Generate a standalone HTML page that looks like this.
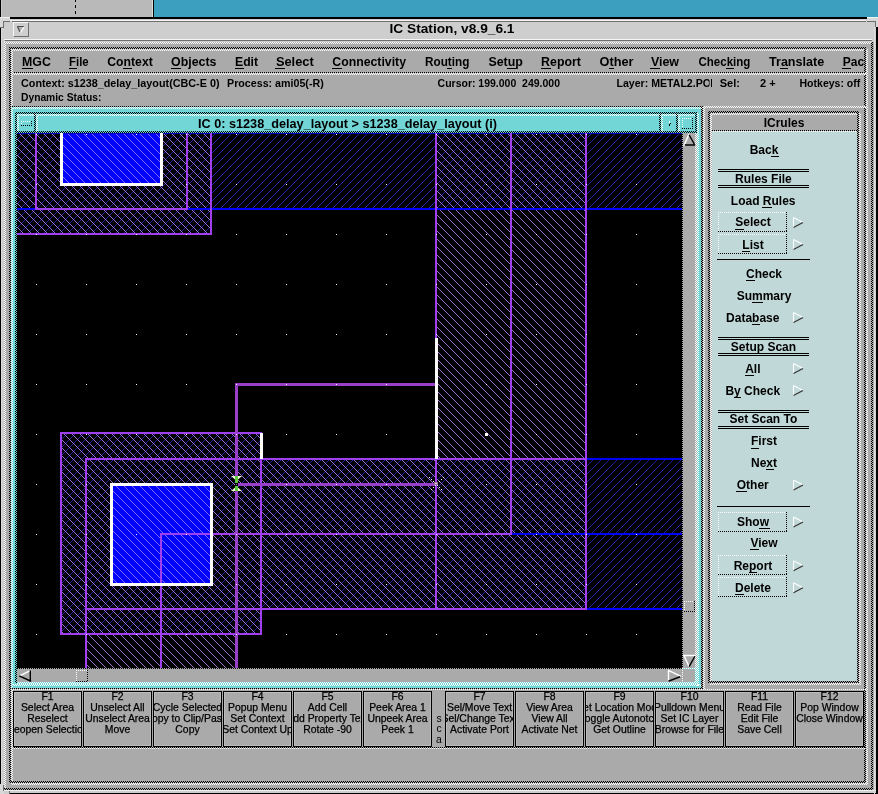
<!DOCTYPE html>
<html><head><meta charset="utf-8"><style>
html,body{margin:0;padding:0;width:878px;height:794px;overflow:hidden;background:#cecece}
svg{display:block;font-family:"Liberation Sans",sans-serif;will-change:transform}
text{white-space:pre}
</style></head><body>
<svg width="878" height="794" viewBox="0 0 878 794" shape-rendering="crispEdges">
<defs>
<pattern id="ck_k0" width="2" height="2" patternUnits="userSpaceOnUse"><rect x="0" y="0" width="1" height="1" fill="#000"/><rect x="1" y="1" width="1" height="1" fill="#000"/></pattern>
<pattern id="ck_w0" width="2" height="2" patternUnits="userSpaceOnUse"><rect x="0" y="0" width="1" height="1" fill="#fff"/><rect x="1" y="1" width="1" height="1" fill="#fff"/></pattern>
<pattern id="ck_k1" width="2" height="2" patternUnits="userSpaceOnUse"><rect x="1" y="0" width="1" height="1" fill="#000"/><rect x="0" y="1" width="1" height="1" fill="#000"/></pattern>
<pattern id="ck_w1" width="2" height="2" patternUnits="userSpaceOnUse"><rect x="1" y="0" width="1" height="1" fill="#fff"/><rect x="0" y="1" width="1" height="1" fill="#fff"/></pattern>
<pattern id="hP" width="8" height="8" patternUnits="userSpaceOnUse"><rect x="0" y="2" width="1" height="1" fill="#a070d0"/><rect x="1" y="3" width="1" height="1" fill="#a070d0"/><rect x="2" y="4" width="1" height="1" fill="#a070d0"/><rect x="3" y="5" width="1" height="1" fill="#a070d0"/><rect x="4" y="6" width="1" height="1" fill="#a070d0"/><rect x="5" y="7" width="1" height="1" fill="#a070d0"/><rect x="6" y="0" width="1" height="1" fill="#a070d0"/><rect x="7" y="1" width="1" height="1" fill="#a070d0"/></pattern>
<pattern id="hB" width="8" height="8" patternUnits="userSpaceOnUse"><rect x="0" y="4" width="1" height="1" fill="#2222a0"/><rect x="1" y="3" width="1" height="1" fill="#2222a0"/><rect x="2" y="2" width="1" height="1" fill="#2222a0"/><rect x="3" y="1" width="1" height="1" fill="#2222a0"/><rect x="4" y="0" width="1" height="1" fill="#2222a0"/><rect x="5" y="7" width="1" height="1" fill="#2222a0"/><rect x="6" y="6" width="1" height="1" fill="#2222a0"/><rect x="7" y="5" width="1" height="1" fill="#2222a0"/></pattern>
<pattern id="hQ" width="8" height="8" patternUnits="userSpaceOnUse"><rect x="0" y="2" width="1" height="1" fill="#8466ff"/><rect x="1" y="3" width="1" height="1" fill="#8466ff"/><rect x="2" y="4" width="1" height="1" fill="#8466ff"/><rect x="3" y="5" width="1" height="1" fill="#8466ff"/><rect x="4" y="6" width="1" height="1" fill="#8466ff"/><rect x="5" y="7" width="1" height="1" fill="#8466ff"/><rect x="6" y="0" width="1" height="1" fill="#8466ff"/><rect x="7" y="1" width="1" height="1" fill="#8466ff"/></pattern>
<clipPath id="clipCanvas"><rect x="17" y="133" width="665" height="535"/></clipPath>
<clipPath id="clipMenu"><rect x="13" y="51" width="852" height="21"/></clipPath>
<clipPath id="clipLayer"><rect x="600" y="74" width="109.5" height="30"/></clipPath>
</defs>
<rect x="0" y="0" width="878" height="794" fill="#cecece" />
<rect x="0" y="0" width="153" height="17" fill="#b9b9b9" />
<rect x="154" y="0" width="724" height="17" fill="#3d9fc0" />
<rect x="152" y="0" width="1" height="17" fill="#dcdcdc" />
<rect x="153" y="0" width="1" height="17" fill="#000" />
<rect x="75" y="0" width="1" height="2" fill="#000" />
<rect x="75" y="5" width="1" height="3" fill="#000" />
<rect x="75" y="11" width="1" height="3" fill="#000" />
<rect x="0" y="0" width="1" height="17" fill="#000" />
<rect x="1" y="0" width="1" height="17" fill="#c8c8c8" />
<rect x="10" y="17" width="857" height="2" fill="#000" />
<rect x="0" y="28" width="1" height="756" fill="#000" />
<rect x="1" y="28" width="1" height="756" fill="#dadada" />
<rect x="0" y="784" width="4" height="10" fill="#d8d8d8" />
<rect x="3" y="785" width="1" height="6" fill="#6e6e6e" />
<rect x="4" y="790" width="872" height="1" fill="#f0f0f0" />
<rect x="10" y="793" width="866" height="1" fill="#000" />
<rect x="9" y="791" width="1" height="3" fill="#6e6e6e" />
<rect x="876" y="27" width="2" height="767" fill="#000" />
<rect x="874" y="27" width="1" height="767" fill="#dadada" />
<rect x="0" y="17" width="10" height="4" fill="#d8d8d8" />
<rect x="0" y="21" width="3" height="6" fill="#d8d8d8" />
<rect x="0" y="17" width="10" height="1" fill="#f0f0f0" />
<rect x="3" y="21" width="7" height="1" fill="#6e6e6e" />
<rect x="3" y="21" width="1" height="6" fill="#6e6e6e" />
<rect x="0" y="27" width="4" height="1" fill="#6e6e6e" />
<rect x="867" y="17" width="11" height="4" fill="#d8d8d8" />
<rect x="875" y="21" width="3" height="6" fill="#d8d8d8" />
<rect x="867" y="17" width="11" height="1" fill="#e8f8f8" />
<rect x="867" y="21" width="8" height="1" fill="#6e6e6e" />
<rect x="875" y="21" width="1" height="6" fill="#6e6e6e" />
<rect x="10" y="20" width="856" height="1" fill="#f4f4f4" />
<rect x="12" y="21" width="854" height="1" fill="#6e6e6e" />
<rect x="13" y="22" width="15" height="1" fill="#f6f6f6" />
<rect x="13" y="22" width="1" height="14" fill="#f6f6f6" />
<rect x="14" y="36" width="15" height="1" fill="#6e6e6e" />
<rect x="28" y="23" width="1" height="14" fill="#6e6e6e" />
<path d="M17 26 L24 26 L20.5 32 Z" fill="#b4b4b4"/><path d="M17 26.5 L24 26.5 M17.5 26.5 L20 32" stroke="#505050" stroke-width="1.2" fill="none" shape-rendering="auto"/><path d="M24 27 L20.5 32.5" stroke="#fff" stroke-width="1.2" shape-rendering="auto"/>
<text x="452" y="33.4" font-size="13.5" font-weight="bold" fill="#000" text-anchor="middle" textLength="125" lengthAdjust="spacingAndGlyphs" >IC Station, v8.9_6.1</text>
<rect x="4" y="39" width="868" height="1" fill="#f6f6f6" />
<rect x="5" y="40" width="867" height="1" fill="#6e6e6e" />
<rect x="4" y="42" width="870" height="748" fill="#aaaaaa" />
<rect x="4" y="42" width="869" height="2" fill="url(#ck_w0)" />
<rect x="4" y="42" width="2" height="748" fill="url(#ck_w0)" />
<rect x="4" y="788" width="869" height="2" fill="url(#ck_k0)" />
<rect x="871" y="42" width="2" height="748" fill="url(#ck_k0)" />
<rect x="11" y="49" width="857" height="2" fill="url(#ck_w0)" />
<rect x="11" y="49" width="2" height="736" fill="url(#ck_w0)" />
<rect x="11" y="783" width="857" height="2" fill="url(#ck_w0)" />
<rect x="866" y="49" width="2" height="736" fill="url(#ck_w0)" />
<rect x="9" y="47" width="857" height="2" fill="url(#ck_k0)" />
<rect x="9" y="47" width="2" height="736" fill="url(#ck_k0)" />
<rect x="9" y="781" width="857" height="2" fill="url(#ck_k0)" />
<rect x="864" y="47" width="2" height="736" fill="url(#ck_k0)" />
<g clip-path="url(#clipMenu)">
<text x="22.0" y="65.7" font-size="12" font-weight="bold" fill="#000" text-anchor="start" textLength="28.8" lengthAdjust="spacingAndGlyphs" >MGC</text>
<rect x="21.5" y="68" width="11.3" height="1" fill="#000"/>
<text x="69.1" y="65.7" font-size="12" font-weight="bold" fill="#000" text-anchor="start" textLength="19.6" lengthAdjust="spacingAndGlyphs" >File</text>
<rect x="68.6" y="68" width="8.0" height="1" fill="#000"/>
<text x="107.2" y="65.7" font-size="12" font-weight="bold" fill="#000" text-anchor="start" textLength="45.6" lengthAdjust="spacingAndGlyphs" >Context</text>
<rect x="123.0" y="68" width="8.5" height="1" fill="#000"/>
<text x="171.1" y="65.7" font-size="12" font-weight="bold" fill="#000" text-anchor="start" textLength="45.4" lengthAdjust="spacingAndGlyphs" >Objects</text>
<rect x="170.6" y="68" width="10.6" height="1" fill="#000"/>
<text x="235.0" y="65.7" font-size="12" font-weight="bold" fill="#000" text-anchor="start" textLength="23.1" lengthAdjust="spacingAndGlyphs" >Edit</text>
<rect x="234.5" y="68" width="9.2" height="1" fill="#000"/>
<text x="275.9" y="65.7" font-size="12" font-weight="bold" fill="#000" text-anchor="start" textLength="37.8" lengthAdjust="spacingAndGlyphs" >Select</text>
<rect x="275.4" y="68" width="9.6" height="1" fill="#000"/>
<text x="332.3" y="65.7" font-size="12" font-weight="bold" fill="#000" text-anchor="start" textLength="73.7" lengthAdjust="spacingAndGlyphs" >Connectivity</text>
<rect x="331.8" y="68" width="9.9" height="1" fill="#000"/>
<text x="425.0" y="65.7" font-size="12" font-weight="bold" fill="#000" text-anchor="start" textLength="44.4" lengthAdjust="spacingAndGlyphs" >Routing</text>
<rect x="447.4" y="68" width="4.9" height="1" fill="#000"/>
<text x="488.4" y="65.7" font-size="12" font-weight="bold" fill="#000" text-anchor="start" textLength="34.4" lengthAdjust="spacingAndGlyphs" >Setup</text>
<rect x="507.2" y="68" width="8.6" height="1" fill="#000"/>
<text x="541.1" y="65.7" font-size="12" font-weight="bold" fill="#000" text-anchor="start" textLength="39.8" lengthAdjust="spacingAndGlyphs" >Report</text>
<rect x="540.6" y="68" width="9.9" height="1" fill="#000"/>
<text x="599.5" y="65.7" font-size="12" font-weight="bold" fill="#000" text-anchor="start" textLength="34" lengthAdjust="spacingAndGlyphs" >Other</text>
<rect x="608.9" y="68" width="5.2" height="1" fill="#000"/>
<text x="650.9" y="65.7" font-size="12" font-weight="bold" fill="#000" text-anchor="start" textLength="28.1" lengthAdjust="spacingAndGlyphs" >View</text>
<rect x="650.4" y="68" width="9.3" height="1" fill="#000"/>
<text x="698.5" y="65.7" font-size="12" font-weight="bold" fill="#000" text-anchor="start" textLength="51.8" lengthAdjust="spacingAndGlyphs" >Checking</text>
<rect x="726.1" y="68" width="7.4" height="1" fill="#000"/>
<text x="769.0" y="65.7" font-size="12" font-weight="bold" fill="#000" text-anchor="start" textLength="55.2" lengthAdjust="spacingAndGlyphs" >Translate</text>
<rect x="780.4" y="68" width="8.0" height="1" fill="#000"/>
<text x="842.8" y="65.7" font-size="12" font-weight="bold" fill="#000" text-anchor="start" >Pac</text>
<rect x="842.3" y="68" width="9.0" height="1" fill="#000"/>
</g>
<g id="ULS"></g>
<rect x="13" y="72" width="853" height="1" fill="url(#ck_k0)" />
<rect x="13" y="73" width="853" height="2" fill="url(#ck_w0)" />
<text x="21" y="86.7" font-size="11" font-weight="bold" fill="#000" text-anchor="start" textLength="198.5" lengthAdjust="spacingAndGlyphs" >Context: s1238_delay_layout(CBC-E 0)</text>
<text x="227.1" y="86.7" font-size="11" font-weight="bold" fill="#000" text-anchor="start" textLength="96.6" lengthAdjust="spacingAndGlyphs" >Process: ami05(-R)</text>
<text x="437.6" y="86.7" font-size="11" font-weight="bold" fill="#000" text-anchor="start" textLength="122.4" lengthAdjust="spacingAndGlyphs" >Cursor: 199.000  249.000</text>
<g clip-path="url(#clipLayer)">
<text x="616.5" y="86.7" font-size="11" font-weight="bold" fill="#000" text-anchor="start" textLength="94.5" lengthAdjust="spacingAndGlyphs" >Layer: METAL2.PO</text>
</g>
<rect x="711" y="79" width="1" height="8" fill="#000" />
<text x="719.7" y="86.7" font-size="11" font-weight="bold" fill="#000" text-anchor="start" >Sel:</text>
<text x="760" y="86.7" font-size="11" font-weight="bold" fill="#000" text-anchor="start" >2 +</text>
<text x="799.5" y="86.7" font-size="11" font-weight="bold" fill="#000" text-anchor="start" textLength="60.8" lengthAdjust="spacingAndGlyphs" >Hotkeys: off</text>
<text x="21" y="100.8" font-size="11" font-weight="bold" fill="#000" text-anchor="start" textLength="80.5" lengthAdjust="spacingAndGlyphs" >Dynamic Status:</text>
<rect x="11" y="106" width="692" height="1" fill="url(#ck_k0)" />
<rect x="703" y="106" width="163" height="2" fill="url(#ck_w0)" />
<rect x="11" y="107" width="690" height="581" fill="#72d6d6" />
<rect x="13" y="107" width="690" height="2" fill="url(#ck_w1)" />
<rect x="11" y="107" width="2" height="582" fill="url(#ck_w0)" />
<rect x="701" y="106" width="2" height="584" fill="url(#ck_k0)" />
<rect x="11" y="688" width="692" height="1" fill="url(#ck_k0)" />
<rect x="703" y="106" width="2" height="584" fill="url(#ck_w0)" />
<rect x="15" y="112" width="682" height="2" fill="url(#ck_k0)" />
<rect x="15" y="112" width="2" height="21" fill="url(#ck_k0)" />
<rect x="15" y="131" width="682" height="2" fill="url(#ck_k0)" />
<rect x="695" y="112" width="2" height="21" fill="url(#ck_k0)" />
<rect x="17" y="114" width="678" height="2" fill="url(#ck_w1)" />
<rect x="17" y="114" width="2" height="17" fill="url(#ck_w1)" />
<rect x="19" y="116" width="676" height="15" fill="#72d6d6" />
<rect x="34" y="114" width="2" height="18" fill="url(#ck_k0)" />
<rect x="36" y="114" width="2" height="18" fill="url(#ck_w1)" />
<path d="M21 121.5 H31 M21.5 121 V126" stroke="#fff" stroke-width="1" stroke-dasharray="1 1"/><path d="M21 125.5 H32 M31.5 121 V126" stroke="#000" stroke-width="1" stroke-dasharray="1 1"/>
<text x="198" y="127.7" font-size="12" font-weight="bold" fill="#000" text-anchor="start" textLength="299" lengthAdjust="spacingAndGlyphs" >IC 0: s1238_delay_layout &gt; s1238_delay_layout (i)</text>
<rect x="659" y="114" width="2" height="18" fill="url(#ck_k0)" />
<rect x="661" y="114" width="2" height="18" fill="url(#ck_w1)" />
<rect x="676" y="114" width="2" height="18" fill="url(#ck_k0)" />
<rect x="678" y="114" width="2" height="18" fill="url(#ck_w1)" />
<rect x="669" y="121" width="1" height="2" fill="#fff" />
<rect x="669" y="124" width="1" height="2" fill="#000" />
<rect x="670" y="123" width="1" height="1" fill="#000" />
<path d="M682 118.5 H693 M682.5 118 V129" stroke="#fff" stroke-width="1" stroke-dasharray="1 1"/><path d="M682 128.5 H694 M692.5 118 V129" stroke="#000" stroke-width="1" stroke-dasharray="1 1"/>
<rect x="16" y="132" width="666" height="1" fill="url(#ck_k0)" />
<rect x="15" y="132" width="2" height="551" fill="url(#ck_k0)" />
<rect x="682" y="133" width="15" height="535" fill="#aaaaaa" />
<rect x="681" y="133" width="1" height="535" fill="url(#ck_k1)" />
<rect x="682" y="133" width="1" height="535" fill="url(#ck_k0)" />
<rect x="17" y="668" width="666" height="14" fill="#aaaaaa" />
<rect x="17" y="668" width="666" height="1" fill="url(#ck_k1)" />
<rect x="695" y="133" width="2" height="550" fill="url(#ck_w0)" />
<rect x="17" y="682" width="680" height="2" fill="url(#ck_w0)" />
<rect x="697" y="113" width="2" height="573" fill="url(#ck_w0)" />
<rect x="13" y="684" width="688" height="2" fill="url(#ck_w1)" />
<rect x="683" y="669" width="12" height="13" fill="#aaaaaa" />
<rect x="682" y="668" width="14" height="1" fill="url(#ck_w0)" />
<rect x="682" y="668" width="1" height="15" fill="url(#ck_w0)" />
<path d="M684 145.5 L688.8 134.5" stroke="#fff" stroke-width="1.4" fill="none" shape-rendering="auto" stroke-linecap="square"/><path d="M689.5 135.5 L694 143.5 M685.5 145 H694.5" stroke="#000" stroke-width="1.4" fill="none" shape-rendering="auto" stroke-linecap="square"/>
<path d="M683.8 655.5 H695 M684 655.5 L688.8 666" stroke="#fff" stroke-width="1.4" fill="none" shape-rendering="auto" stroke-linecap="square"/><path d="M694.5 657 L689.5 666" stroke="#000" stroke-width="1.4" fill="none" shape-rendering="auto" stroke-linecap="square"/>
<path d="M30.5 670.5 L19.8 675.8" stroke="#fff" stroke-width="1.4" fill="none" shape-rendering="auto" stroke-linecap="square"/><path d="M19.8 676.2 L30.5 681 M30.3 671 V681" stroke="#000" stroke-width="1.4" fill="none" shape-rendering="auto" stroke-linecap="square"/>
<path d="M668.5 670.5 V681.5 M668.5 670.5 L680.3 676" stroke="#fff" stroke-width="1.4" fill="none" shape-rendering="auto" stroke-linecap="square"/><path d="M669 681 L679.5 677" stroke="#000" stroke-width="1.4" fill="none" shape-rendering="auto" stroke-linecap="square"/>
<path d="M76 670.5 H88 M76.5 670 V682" stroke="#fff" stroke-dasharray="1 1"/><path d="M76 681.5 H88 M87.5 670 V682" stroke="#000" stroke-dasharray="1 1"/>
<path d="M684 601.5 H695 M684.5 601 V612" stroke="#fff" stroke-dasharray="1 1"/><path d="M684 611.5 H695 M694.5 601 V612" stroke="#000" stroke-dasharray="1 1"/>
<g clip-path="url(#clipCanvas)">
<rect x="17" y="133" width="665" height="535" fill="#000" />
<rect x="17" y="133" width="665" height="77" fill="url(#hB)" />
<rect x="17" y="133" width="195" height="102" fill="url(#hB)" />
<rect x="61" y="433" width="201" height="202" fill="url(#hB)" />
<rect x="86" y="459" width="596" height="151" fill="url(#hB)" />
<rect x="17" y="120" width="195" height="115" fill="url(#hP)" />
<rect x="436" y="120" width="151" height="490" fill="url(#hP)" />
<rect x="61" y="433" width="201" height="202" fill="url(#hP)" />
<rect x="86" y="459" width="501" height="151" fill="url(#hP)" />
<rect x="86" y="609" width="151" height="60" fill="url(#hP)" />
<rect x="61" y="120" width="102" height="65" fill="#0000ff" />
<rect x="61" y="120" width="102" height="65" fill="url(#hQ)" />
<rect x="111" y="484" width="102" height="101" fill="#0000ff" />
<rect x="111" y="484" width="102" height="101" fill="url(#hQ)" />
<rect x="17" y="208" width="665" height="2" fill="#0000ff" />
<rect x="17" y="133" width="665" height="1" fill="#0000c0" />
<rect x="586" y="458" width="96" height="2" fill="#0000ff" />
<rect x="511" y="533" width="171" height="2" fill="#0000ff" />
<rect x="586" y="608" width="96" height="2" fill="#0000ff" />
<rect x="35" y="120" width="153" height="2" fill="#a040f0" />
<rect x="35" y="208" width="153" height="2" fill="#a040f0" />
<rect x="35" y="120" width="2" height="90" fill="#a040f0" />
<rect x="186" y="120" width="2" height="90" fill="#a040f0" />
<rect x="10" y="120" width="202" height="2" fill="#a040f0" />
<rect x="10" y="233" width="202" height="2" fill="#a040f0" />
<rect x="10" y="120" width="2" height="115" fill="#a040f0" />
<rect x="210" y="120" width="2" height="115" fill="#a040f0" />
<rect x="435" y="120" width="152" height="2" fill="#a040f0" />
<rect x="435" y="608" width="152" height="2" fill="#a040f0" />
<rect x="435" y="120" width="2" height="490" fill="#a040f0" />
<rect x="585" y="120" width="2" height="490" fill="#a040f0" />
<rect x="510" y="120" width="2" height="415" fill="#a040f0" />
<rect x="60" y="432" width="202" height="2" fill="#a040f0" />
<rect x="60" y="633" width="202" height="2" fill="#a040f0" />
<rect x="60" y="432" width="2" height="203" fill="#a040f0" />
<rect x="260" y="432" width="2" height="203" fill="#a040f0" />
<rect x="85" y="458" width="502" height="2" fill="#a040f0" />
<rect x="85" y="608" width="502" height="2" fill="#a040f0" />
<rect x="85" y="458" width="2" height="152" fill="#a040f0" />
<rect x="585" y="458" width="2" height="152" fill="#a040f0" />
<rect x="85" y="608" width="2" height="62" fill="#a040f0" />
<rect x="160" y="533" width="2" height="137" fill="#a040f0" />
<rect x="235" y="608" width="2" height="62" fill="#a040f0" />
<rect x="160" y="533" width="352" height="2" fill="#a040f0" />
<rect x="235" y="383" width="202" height="3" fill="#9a40c8" />
<rect x="235" y="383" width="3" height="287" fill="#9a40c8" />
<rect x="235" y="483" width="202" height="3" fill="#9a40c8" />
<rect x="61.5" y="120" width="100" height="64.5" fill="none" stroke="#fff" stroke-width="3"/>
<rect x="111.5" y="484.5" width="99.5" height="100" fill="none" stroke="#fff" stroke-width="3"/>
<rect x="435" y="338" width="3" height="121" fill="#fff" />
<rect x="260" y="433" width="3" height="26" fill="#fff" />
<rect x="36" y="134" width="1" height="1" fill="#fff" />
<rect x="36" y="184" width="1" height="1" fill="#fff" />
<rect x="36" y="234" width="1" height="1" fill="#fff" />
<rect x="36" y="284" width="1" height="1" fill="#fff" />
<rect x="36" y="334" width="1" height="1" fill="#fff" />
<rect x="36" y="384" width="1" height="1" fill="#fff" />
<rect x="36" y="434" width="1" height="1" fill="#fff" />
<rect x="36" y="484" width="1" height="1" fill="#fff" />
<rect x="36" y="534" width="1" height="1" fill="#fff" />
<rect x="36" y="584" width="1" height="1" fill="#fff" />
<rect x="36" y="634" width="1" height="1" fill="#fff" />
<rect x="86" y="134" width="1" height="1" fill="#fff" />
<rect x="86" y="184" width="1" height="1" fill="#fff" />
<rect x="86" y="234" width="1" height="1" fill="#fff" />
<rect x="86" y="284" width="1" height="1" fill="#fff" />
<rect x="86" y="334" width="1" height="1" fill="#fff" />
<rect x="86" y="384" width="1" height="1" fill="#fff" />
<rect x="86" y="434" width="1" height="1" fill="#fff" />
<rect x="86" y="484" width="1" height="1" fill="#fff" />
<rect x="86" y="534" width="1" height="1" fill="#fff" />
<rect x="86" y="584" width="1" height="1" fill="#fff" />
<rect x="86" y="634" width="1" height="1" fill="#fff" />
<rect x="136" y="134" width="1" height="1" fill="#fff" />
<rect x="136" y="184" width="1" height="1" fill="#fff" />
<rect x="136" y="234" width="1" height="1" fill="#fff" />
<rect x="136" y="284" width="1" height="1" fill="#fff" />
<rect x="136" y="334" width="1" height="1" fill="#fff" />
<rect x="136" y="384" width="1" height="1" fill="#fff" />
<rect x="136" y="434" width="1" height="1" fill="#fff" />
<rect x="136" y="484" width="1" height="1" fill="#fff" />
<rect x="136" y="534" width="1" height="1" fill="#fff" />
<rect x="136" y="584" width="1" height="1" fill="#fff" />
<rect x="136" y="634" width="1" height="1" fill="#fff" />
<rect x="186" y="134" width="1" height="1" fill="#fff" />
<rect x="186" y="184" width="1" height="1" fill="#fff" />
<rect x="186" y="234" width="1" height="1" fill="#fff" />
<rect x="186" y="284" width="1" height="1" fill="#fff" />
<rect x="186" y="334" width="1" height="1" fill="#fff" />
<rect x="186" y="384" width="1" height="1" fill="#fff" />
<rect x="186" y="434" width="1" height="1" fill="#fff" />
<rect x="186" y="484" width="1" height="1" fill="#fff" />
<rect x="186" y="534" width="1" height="1" fill="#fff" />
<rect x="186" y="584" width="1" height="1" fill="#fff" />
<rect x="186" y="634" width="1" height="1" fill="#fff" />
<rect x="236" y="134" width="1" height="1" fill="#fff" />
<rect x="236" y="184" width="1" height="1" fill="#fff" />
<rect x="236" y="234" width="1" height="1" fill="#fff" />
<rect x="236" y="284" width="1" height="1" fill="#fff" />
<rect x="236" y="334" width="1" height="1" fill="#fff" />
<rect x="236" y="384" width="1" height="1" fill="#fff" />
<rect x="236" y="434" width="1" height="1" fill="#fff" />
<rect x="236" y="484" width="1" height="1" fill="#fff" />
<rect x="236" y="534" width="1" height="1" fill="#fff" />
<rect x="236" y="584" width="1" height="1" fill="#fff" />
<rect x="236" y="634" width="1" height="1" fill="#fff" />
<rect x="286" y="134" width="1" height="1" fill="#fff" />
<rect x="286" y="184" width="1" height="1" fill="#fff" />
<rect x="286" y="234" width="1" height="1" fill="#fff" />
<rect x="286" y="284" width="1" height="1" fill="#fff" />
<rect x="286" y="334" width="1" height="1" fill="#fff" />
<rect x="286" y="384" width="1" height="1" fill="#fff" />
<rect x="286" y="434" width="1" height="1" fill="#fff" />
<rect x="286" y="484" width="1" height="1" fill="#fff" />
<rect x="286" y="534" width="1" height="1" fill="#fff" />
<rect x="286" y="584" width="1" height="1" fill="#fff" />
<rect x="286" y="634" width="1" height="1" fill="#fff" />
<rect x="336" y="134" width="1" height="1" fill="#fff" />
<rect x="336" y="184" width="1" height="1" fill="#fff" />
<rect x="336" y="234" width="1" height="1" fill="#fff" />
<rect x="336" y="284" width="1" height="1" fill="#fff" />
<rect x="336" y="334" width="1" height="1" fill="#fff" />
<rect x="336" y="384" width="1" height="1" fill="#fff" />
<rect x="336" y="434" width="1" height="1" fill="#fff" />
<rect x="336" y="484" width="1" height="1" fill="#fff" />
<rect x="336" y="534" width="1" height="1" fill="#fff" />
<rect x="336" y="584" width="1" height="1" fill="#fff" />
<rect x="336" y="634" width="1" height="1" fill="#fff" />
<rect x="386" y="134" width="1" height="1" fill="#fff" />
<rect x="386" y="184" width="1" height="1" fill="#fff" />
<rect x="386" y="234" width="1" height="1" fill="#fff" />
<rect x="386" y="284" width="1" height="1" fill="#fff" />
<rect x="386" y="334" width="1" height="1" fill="#fff" />
<rect x="386" y="384" width="1" height="1" fill="#fff" />
<rect x="386" y="434" width="1" height="1" fill="#fff" />
<rect x="386" y="484" width="1" height="1" fill="#fff" />
<rect x="386" y="534" width="1" height="1" fill="#fff" />
<rect x="386" y="584" width="1" height="1" fill="#fff" />
<rect x="386" y="634" width="1" height="1" fill="#fff" />
<rect x="436" y="134" width="1" height="1" fill="#fff" />
<rect x="436" y="184" width="1" height="1" fill="#fff" />
<rect x="436" y="234" width="1" height="1" fill="#fff" />
<rect x="436" y="284" width="1" height="1" fill="#fff" />
<rect x="436" y="334" width="1" height="1" fill="#fff" />
<rect x="436" y="384" width="1" height="1" fill="#fff" />
<rect x="436" y="434" width="1" height="1" fill="#fff" />
<rect x="436" y="484" width="1" height="1" fill="#fff" />
<rect x="436" y="534" width="1" height="1" fill="#fff" />
<rect x="436" y="584" width="1" height="1" fill="#fff" />
<rect x="436" y="634" width="1" height="1" fill="#fff" />
<rect x="486" y="134" width="1" height="1" fill="#fff" />
<rect x="486" y="184" width="1" height="1" fill="#fff" />
<rect x="486" y="234" width="1" height="1" fill="#fff" />
<rect x="486" y="284" width="1" height="1" fill="#fff" />
<rect x="486" y="334" width="1" height="1" fill="#fff" />
<rect x="486" y="384" width="1" height="1" fill="#fff" />
<rect x="486" y="434" width="1" height="1" fill="#fff" />
<rect x="486" y="484" width="1" height="1" fill="#fff" />
<rect x="486" y="534" width="1" height="1" fill="#fff" />
<rect x="486" y="584" width="1" height="1" fill="#fff" />
<rect x="486" y="634" width="1" height="1" fill="#fff" />
<rect x="536" y="134" width="1" height="1" fill="#fff" />
<rect x="536" y="184" width="1" height="1" fill="#fff" />
<rect x="536" y="234" width="1" height="1" fill="#fff" />
<rect x="536" y="284" width="1" height="1" fill="#fff" />
<rect x="536" y="334" width="1" height="1" fill="#fff" />
<rect x="536" y="384" width="1" height="1" fill="#fff" />
<rect x="536" y="434" width="1" height="1" fill="#fff" />
<rect x="536" y="484" width="1" height="1" fill="#fff" />
<rect x="536" y="534" width="1" height="1" fill="#fff" />
<rect x="536" y="584" width="1" height="1" fill="#fff" />
<rect x="536" y="634" width="1" height="1" fill="#fff" />
<rect x="586" y="134" width="1" height="1" fill="#fff" />
<rect x="586" y="184" width="1" height="1" fill="#fff" />
<rect x="586" y="234" width="1" height="1" fill="#fff" />
<rect x="586" y="284" width="1" height="1" fill="#fff" />
<rect x="586" y="334" width="1" height="1" fill="#fff" />
<rect x="586" y="384" width="1" height="1" fill="#fff" />
<rect x="586" y="434" width="1" height="1" fill="#fff" />
<rect x="586" y="484" width="1" height="1" fill="#fff" />
<rect x="586" y="534" width="1" height="1" fill="#fff" />
<rect x="586" y="584" width="1" height="1" fill="#fff" />
<rect x="586" y="634" width="1" height="1" fill="#fff" />
<rect x="636" y="134" width="1" height="1" fill="#fff" />
<rect x="636" y="184" width="1" height="1" fill="#fff" />
<rect x="636" y="234" width="1" height="1" fill="#fff" />
<rect x="636" y="284" width="1" height="1" fill="#fff" />
<rect x="636" y="334" width="1" height="1" fill="#fff" />
<rect x="636" y="384" width="1" height="1" fill="#fff" />
<rect x="636" y="434" width="1" height="1" fill="#fff" />
<rect x="636" y="484" width="1" height="1" fill="#fff" />
<rect x="636" y="534" width="1" height="1" fill="#fff" />
<rect x="636" y="584" width="1" height="1" fill="#fff" />
<rect x="636" y="634" width="1" height="1" fill="#fff" />
<rect x="485" y="433" width="3" height="3" fill="#fff" />
<path d="M231 476 L242 476 L238 479.5 L235 479.5 Z M231 491 L242 491 L238 487.5 L235 487.5 Z" fill="#f0f8d0" shape-rendering="auto"/>
<rect x="235" y="476" width="3" height="7" fill="#60c840" />
<rect x="235" y="486" width="3" height="5" fill="#60c840" />
<rect x="235" y="483" width="3" height="3" fill="#000" />
<rect x="236" y="484" width="1" height="1" fill="#808080" />
<rect x="429" y="477" width="1" height="1" fill="#f0f0f0" />
<rect x="443" y="477" width="1" height="1" fill="#f0f0f0" />
<rect x="431" y="479" width="1" height="1" fill="#f0f0f0" />
<rect x="441" y="479" width="1" height="1" fill="#f0f0f0" />
<rect x="433" y="481" width="1" height="1" fill="#f0f0f0" />
<rect x="439" y="481" width="1" height="1" fill="#f0f0f0" />
<rect x="435" y="483" width="1" height="1" fill="#f0f0f0" />
<rect x="437" y="483" width="1" height="1" fill="#f0f0f0" />
<rect x="437" y="485" width="1" height="1" fill="#f0f0f0" />
<rect x="435" y="485" width="1" height="1" fill="#f0f0f0" />
<rect x="439" y="487" width="1" height="1" fill="#f0f0f0" />
<rect x="433" y="487" width="1" height="1" fill="#f0f0f0" />
<rect x="441" y="489" width="1" height="1" fill="#f0f0f0" />
<rect x="431" y="489" width="1" height="1" fill="#f0f0f0" />
<rect x="434" y="482" width="4" height="3" fill="#a070a0" />
<rect x="435" y="483" width="2" height="1" fill="#d0d0d0" />
</g>
<rect x="710" y="113" width="151" height="2" fill="url(#ck_w0)" />
<rect x="710" y="113" width="2" height="572" fill="url(#ck_w0)" />
<rect x="710" y="683" width="151" height="2" fill="url(#ck_w0)" />
<rect x="859" y="113" width="2" height="572" fill="url(#ck_w0)" />
<rect x="708" y="111" width="151" height="2" fill="url(#ck_k0)" />
<rect x="708" y="111" width="2" height="572" fill="url(#ck_k0)" />
<rect x="708" y="681" width="151" height="2" fill="url(#ck_k0)" />
<rect x="857" y="111" width="2" height="572" fill="url(#ck_k0)" />
<rect x="712" y="115" width="145" height="15" fill="#aaaaaa" />
<rect x="712" y="130" width="145" height="1" fill="url(#ck_k0)" />
<rect x="712" y="131" width="145" height="550" fill="#c0d8d8" />
<rect x="712" y="131" width="145" height="1" fill="url(#ck_w0)" />
<text x="784" y="126.6" font-size="12" font-weight="bold" fill="#000" text-anchor="middle" >ICrules</text>
<text x="764" y="153.9" font-size="12" font-weight="bold" fill="#000" text-anchor="middle" >Back</text>
<rect x="771.2" y="156" width="7.7" height="1" fill="#000"/>
<text x="763.4" y="182.7" font-size="12" font-weight="bold" fill="#000" text-anchor="middle" >Rules File</text>
<text x="763.2" y="205" font-size="12" font-weight="bold" fill="#000" text-anchor="middle" >Load Rules</text>
<rect x="762.4" y="207" width="9.7" height="1" fill="#000"/>
<path d="M718 212.4 H786 M718.5 211.9 V231.9" stroke="#fff" stroke-width="1" stroke-dasharray="1 1" fill="none"/><path d="M718 231.4 H787 M786.5 211.9 V231.9" stroke="#000" stroke-width="1" stroke-dasharray="1 1" fill="none"/>
<text x="753" y="226.4" font-size="12" font-weight="bold" fill="#000" text-anchor="middle" >Select</text>
<rect x="734.8" y="229" width="9.0" height="1" fill="#000"/>
<path d="M793.5 217.4 L803 222.4 M793.5 217.4 L793.5 227.4" stroke="#fff" stroke-width="1.1" fill="none" shape-rendering="auto"/><path d="M793.5 227.4 L803 222.4" stroke="#303030" stroke-width="1.1" fill="none" shape-rendering="auto"/>
<path d="M718 234.5 H786 M718.5 234.0 V254.0" stroke="#fff" stroke-width="1" stroke-dasharray="1 1" fill="none"/><path d="M718 253.5 H787 M786.5 234.0 V254.0" stroke="#000" stroke-width="1" stroke-dasharray="1 1" fill="none"/>
<text x="753" y="248.5" font-size="12" font-weight="bold" fill="#000" text-anchor="middle" >List</text>
<rect x="741.8" y="251" width="8.3" height="1" fill="#000"/>
<path d="M793.5 239.5 L803 244.5 M793.5 239.5 L793.5 249.5" stroke="#fff" stroke-width="1.1" fill="none" shape-rendering="auto"/><path d="M793.5 249.5 L803 244.5" stroke="#303030" stroke-width="1.1" fill="none" shape-rendering="auto"/>
<text x="764" y="277.7" font-size="12" font-weight="bold" fill="#000" text-anchor="middle" >Check</text>
<rect x="745.5" y="280" width="9.7" height="1" fill="#000"/>
<text x="764" y="299.6" font-size="12" font-weight="bold" fill="#000" text-anchor="middle" >Summary</text>
<rect x="751.5" y="302" width="11.7" height="1" fill="#000"/>
<text x="752.8" y="321.5" font-size="12" font-weight="bold" fill="#000" text-anchor="middle" >Database</text>
<rect x="751.6" y="324" width="8.3" height="1" fill="#000"/>
<path d="M793.5 312.5 L803 317.5 M793.5 312.5 L793.5 322.5" stroke="#fff" stroke-width="1.1" fill="none" shape-rendering="auto"/><path d="M793.5 322.5 L803 317.5" stroke="#303030" stroke-width="1.1" fill="none" shape-rendering="auto"/>
<text x="763.4" y="350.5" font-size="12" font-weight="bold" fill="#000" text-anchor="middle" >Setup Scan</text>
<text x="752.8" y="372.5" font-size="12" font-weight="bold" fill="#000" text-anchor="middle" >All</text>
<rect x="744.6" y="375" width="9.7" height="1" fill="#000"/>
<path d="M793.5 363.5 L803 368.5 M793.5 363.5 L793.5 373.5" stroke="#fff" stroke-width="1.1" fill="none" shape-rendering="auto"/><path d="M793.5 373.5 L803 368.5" stroke="#303030" stroke-width="1.1" fill="none" shape-rendering="auto"/>
<text x="752.8" y="394.6" font-size="12" font-weight="bold" fill="#000" text-anchor="middle" >By Check</text>
<rect x="733.6" y="397" width="7.7" height="1" fill="#000"/>
<path d="M793.5 385.6 L803 390.6 M793.5 385.6 L793.5 395.6" stroke="#fff" stroke-width="1.1" fill="none" shape-rendering="auto"/><path d="M793.5 395.6 L803 390.6" stroke="#303030" stroke-width="1.1" fill="none" shape-rendering="auto"/>
<text x="763.4" y="423.3" font-size="12" font-weight="bold" fill="#000" text-anchor="middle" >Set Scan To</text>
<text x="764" y="445.2" font-size="12" font-weight="bold" fill="#000" text-anchor="middle" >First</text>
<rect x="750.5" y="448" width="8.3" height="1" fill="#000"/>
<text x="764" y="467.1" font-size="12" font-weight="bold" fill="#000" text-anchor="middle" >Next</text>
<rect x="765.8" y="469" width="7.7" height="1" fill="#000"/>
<text x="752.8" y="489" font-size="12" font-weight="bold" fill="#000" text-anchor="middle" >Other</text>
<rect x="736.3" y="491" width="10.3" height="1" fill="#000"/>
<path d="M793.5 480 L803 485 M793.5 480 L793.5 490" stroke="#fff" stroke-width="1.1" fill="none" shape-rendering="auto"/><path d="M793.5 490 L803 485" stroke="#303030" stroke-width="1.1" fill="none" shape-rendering="auto"/>
<path d="M718 512.0 H786 M718.5 511.5 V531.5" stroke="#fff" stroke-width="1" stroke-dasharray="1 1" fill="none"/><path d="M718 531.0 H787 M786.5 511.5 V531.5" stroke="#000" stroke-width="1" stroke-dasharray="1 1" fill="none"/>
<text x="753" y="526" font-size="12" font-weight="bold" fill="#000" text-anchor="middle" >Show</text>
<rect x="759.2" y="528" width="10.3" height="1" fill="#000"/>
<path d="M793.5 517 L803 522 M793.5 517 L793.5 527" stroke="#fff" stroke-width="1.1" fill="none" shape-rendering="auto"/><path d="M793.5 527 L803 522" stroke="#303030" stroke-width="1.1" fill="none" shape-rendering="auto"/>
<text x="764" y="547.1" font-size="12" font-weight="bold" fill="#000" text-anchor="middle" >View</text>
<rect x="749.9" y="549" width="9.0" height="1" fill="#000"/>
<path d="M718 555.8 H786 M718.5 555.3 V575.3" stroke="#fff" stroke-width="1" stroke-dasharray="1 1" fill="none"/><path d="M718 574.8 H787 M786.5 555.3 V575.3" stroke="#000" stroke-width="1" stroke-dasharray="1 1" fill="none"/>
<text x="753" y="569.8" font-size="12" font-weight="bold" fill="#000" text-anchor="middle" >Report</text>
<rect x="748.5" y="572" width="8.3" height="1" fill="#000"/>
<path d="M793.5 560.8 L803 565.8 M793.5 560.8 L793.5 570.8" stroke="#fff" stroke-width="1.1" fill="none" shape-rendering="auto"/><path d="M793.5 570.8 L803 565.8" stroke="#303030" stroke-width="1.1" fill="none" shape-rendering="auto"/>
<path d="M718 577.7 H786 M718.5 577.2 V597.2" stroke="#fff" stroke-width="1" stroke-dasharray="1 1" fill="none"/><path d="M718 596.7 H787 M786.5 577.2 V597.2" stroke="#000" stroke-width="1" stroke-dasharray="1 1" fill="none"/>
<text x="753" y="591.7" font-size="12" font-weight="bold" fill="#000" text-anchor="middle" >Delete</text>
<rect x="734.5" y="594" width="9.7" height="1" fill="#000"/>
<path d="M793.5 582.7 L803 587.7 M793.5 582.7 L793.5 592.7" stroke="#fff" stroke-width="1.1" fill="none" shape-rendering="auto"/><path d="M793.5 592.7 L803 587.7" stroke="#303030" stroke-width="1.1" fill="none" shape-rendering="auto"/>
<rect x="718" y="169" width="91" height="1" fill="#000" />
<rect x="718" y="171" width="91" height="1" fill="#000" />
<rect x="718" y="185" width="91" height="1" fill="#000" />
<rect x="718" y="187" width="91" height="1" fill="#000" />
<rect x="718" y="337" width="91" height="1" fill="#000" />
<rect x="718" y="339" width="91" height="1" fill="#000" />
<rect x="718" y="353" width="91" height="1" fill="#000" />
<rect x="718" y="355" width="91" height="1" fill="#000" />
<rect x="718" y="410" width="91" height="1" fill="#000" />
<rect x="718" y="412" width="91" height="1" fill="#000" />
<rect x="718" y="426" width="91" height="1" fill="#000" />
<rect x="718" y="428" width="91" height="1" fill="#000" />
<rect x="717" y="259" width="93" height="1" fill="#000" />
<rect x="717" y="506" width="93" height="1" fill="#000" />
<rect x="11" y="689" width="855" height="1" fill="url(#ck_w0)" />
<rect x="13.5" y="691.5" width="68" height="55" fill="#aaaaaa" stroke="#000" stroke-width="1"/>
<rect x="14.5" y="692.5" width="66" height="53" fill="none" stroke="#bcbcbc" stroke-width="1"/>
<clipPath id="fk0"><rect x="14" y="692" width="67" height="54"/></clipPath>
<g clip-path="url(#fk0)">
<text x="47.5" y="699.7" font-size="10.4" font-weight="normal" fill="#000" text-anchor="middle" stroke="#000" stroke-width="0.25">F1</text>
<text x="47.5" y="710.8" font-size="10.4" font-weight="normal" fill="#000" text-anchor="middle" stroke="#000" stroke-width="0.25">Select Area</text>
<text x="47.5" y="721.6999999999999" font-size="10.4" font-weight="normal" fill="#000" text-anchor="middle" stroke="#000" stroke-width="0.25">Reselect</text>
<text x="47.5" y="732.5999999999999" font-size="10.4" font-weight="normal" fill="#000" text-anchor="middle" stroke="#000" stroke-width="0.25">Reopen Selection</text>
</g>
<rect x="83.5" y="691.5" width="68" height="55" fill="#aaaaaa" stroke="#000" stroke-width="1"/>
<rect x="84.5" y="692.5" width="66" height="53" fill="none" stroke="#bcbcbc" stroke-width="1"/>
<clipPath id="fk1"><rect x="84" y="692" width="67" height="54"/></clipPath>
<g clip-path="url(#fk1)">
<text x="117.5" y="699.7" font-size="10.4" font-weight="normal" fill="#000" text-anchor="middle" stroke="#000" stroke-width="0.25">F2</text>
<text x="117.5" y="710.8" font-size="10.4" font-weight="normal" fill="#000" text-anchor="middle" stroke="#000" stroke-width="0.25">Unselect All</text>
<text x="117.5" y="721.6999999999999" font-size="10.4" font-weight="normal" fill="#000" text-anchor="middle" stroke="#000" stroke-width="0.25">Unselect Area</text>
<text x="117.5" y="732.5999999999999" font-size="10.4" font-weight="normal" fill="#000" text-anchor="middle" stroke="#000" stroke-width="0.25">Move</text>
</g>
<rect x="153.5" y="691.5" width="68" height="55" fill="#aaaaaa" stroke="#000" stroke-width="1"/>
<rect x="154.5" y="692.5" width="66" height="53" fill="none" stroke="#bcbcbc" stroke-width="1"/>
<clipPath id="fk2"><rect x="154" y="692" width="67" height="54"/></clipPath>
<g clip-path="url(#fk2)">
<text x="187.5" y="699.7" font-size="10.4" font-weight="normal" fill="#000" text-anchor="middle" stroke="#000" stroke-width="0.25">F3</text>
<text x="187.5" y="710.8" font-size="10.4" font-weight="normal" fill="#000" text-anchor="middle" stroke="#000" stroke-width="0.25">Cycle Selected</text>
<text x="187.5" y="721.6999999999999" font-size="10.4" font-weight="normal" fill="#000" text-anchor="middle" stroke="#000" stroke-width="0.25">Copy to Clip/Paste</text>
<text x="187.5" y="732.5999999999999" font-size="10.4" font-weight="normal" fill="#000" text-anchor="middle" stroke="#000" stroke-width="0.25">Copy</text>
</g>
<rect x="223.5" y="691.5" width="68" height="55" fill="#aaaaaa" stroke="#000" stroke-width="1"/>
<rect x="224.5" y="692.5" width="66" height="53" fill="none" stroke="#bcbcbc" stroke-width="1"/>
<clipPath id="fk3"><rect x="224" y="692" width="67" height="54"/></clipPath>
<g clip-path="url(#fk3)">
<text x="257.5" y="699.7" font-size="10.4" font-weight="normal" fill="#000" text-anchor="middle" stroke="#000" stroke-width="0.25">F4</text>
<text x="257.5" y="710.8" font-size="10.4" font-weight="normal" fill="#000" text-anchor="middle" stroke="#000" stroke-width="0.25">Popup Menu</text>
<text x="257.5" y="721.6999999999999" font-size="10.4" font-weight="normal" fill="#000" text-anchor="middle" stroke="#000" stroke-width="0.25">Set Context</text>
<text x="257.5" y="732.5999999999999" font-size="10.4" font-weight="normal" fill="#000" text-anchor="middle" stroke="#000" stroke-width="0.25">Set Context Up</text>
</g>
<rect x="293.5" y="691.5" width="68" height="55" fill="#aaaaaa" stroke="#000" stroke-width="1"/>
<rect x="294.5" y="692.5" width="66" height="53" fill="none" stroke="#bcbcbc" stroke-width="1"/>
<clipPath id="fk4"><rect x="294" y="692" width="67" height="54"/></clipPath>
<g clip-path="url(#fk4)">
<text x="327.5" y="699.7" font-size="10.4" font-weight="normal" fill="#000" text-anchor="middle" stroke="#000" stroke-width="0.25">F5</text>
<text x="327.5" y="710.8" font-size="10.4" font-weight="normal" fill="#000" text-anchor="middle" stroke="#000" stroke-width="0.25">Add Cell</text>
<text x="327.5" y="721.6999999999999" font-size="10.4" font-weight="normal" fill="#000" text-anchor="middle" stroke="#000" stroke-width="0.25">Add Property Text</text>
<text x="327.5" y="732.5999999999999" font-size="10.4" font-weight="normal" fill="#000" text-anchor="middle" stroke="#000" stroke-width="0.25">Rotate -90</text>
</g>
<rect x="363.5" y="691.5" width="68" height="55" fill="#aaaaaa" stroke="#000" stroke-width="1"/>
<rect x="364.5" y="692.5" width="66" height="53" fill="none" stroke="#bcbcbc" stroke-width="1"/>
<clipPath id="fk5"><rect x="364" y="692" width="67" height="54"/></clipPath>
<g clip-path="url(#fk5)">
<text x="397.5" y="699.7" font-size="10.4" font-weight="normal" fill="#000" text-anchor="middle" stroke="#000" stroke-width="0.25">F6</text>
<text x="397.5" y="710.8" font-size="10.4" font-weight="normal" fill="#000" text-anchor="middle" stroke="#000" stroke-width="0.25">Peek Area 1</text>
<text x="397.5" y="721.6999999999999" font-size="10.4" font-weight="normal" fill="#000" text-anchor="middle" stroke="#000" stroke-width="0.25">Unpeek Area</text>
<text x="397.5" y="732.5999999999999" font-size="10.4" font-weight="normal" fill="#000" text-anchor="middle" stroke="#000" stroke-width="0.25">Peek 1</text>
</g>
<rect x="445.5" y="691.5" width="68" height="55" fill="#aaaaaa" stroke="#000" stroke-width="1"/>
<rect x="446.5" y="692.5" width="66" height="53" fill="none" stroke="#bcbcbc" stroke-width="1"/>
<clipPath id="fk6"><rect x="446" y="692" width="67" height="54"/></clipPath>
<g clip-path="url(#fk6)">
<text x="479.5" y="699.7" font-size="10.4" font-weight="normal" fill="#000" text-anchor="middle" stroke="#000" stroke-width="0.25">F7</text>
<text x="479.5" y="710.8" font-size="10.4" font-weight="normal" fill="#000" text-anchor="middle" stroke="#000" stroke-width="0.25">Sel/Move Text</text>
<text x="479.5" y="721.6999999999999" font-size="10.4" font-weight="normal" fill="#000" text-anchor="middle" stroke="#000" stroke-width="0.25">Sel/Change Text</text>
<text x="479.5" y="732.5999999999999" font-size="10.4" font-weight="normal" fill="#000" text-anchor="middle" stroke="#000" stroke-width="0.25">Activate Port</text>
</g>
<rect x="515.5" y="691.5" width="68" height="55" fill="#aaaaaa" stroke="#000" stroke-width="1"/>
<rect x="516.5" y="692.5" width="66" height="53" fill="none" stroke="#bcbcbc" stroke-width="1"/>
<clipPath id="fk7"><rect x="516" y="692" width="67" height="54"/></clipPath>
<g clip-path="url(#fk7)">
<text x="549.5" y="699.7" font-size="10.4" font-weight="normal" fill="#000" text-anchor="middle" stroke="#000" stroke-width="0.25">F8</text>
<text x="549.5" y="710.8" font-size="10.4" font-weight="normal" fill="#000" text-anchor="middle" stroke="#000" stroke-width="0.25">View Area</text>
<text x="549.5" y="721.6999999999999" font-size="10.4" font-weight="normal" fill="#000" text-anchor="middle" stroke="#000" stroke-width="0.25">View All</text>
<text x="549.5" y="732.5999999999999" font-size="10.4" font-weight="normal" fill="#000" text-anchor="middle" stroke="#000" stroke-width="0.25">Activate Net</text>
</g>
<rect x="585.5" y="691.5" width="68" height="55" fill="#aaaaaa" stroke="#000" stroke-width="1"/>
<rect x="586.5" y="692.5" width="66" height="53" fill="none" stroke="#bcbcbc" stroke-width="1"/>
<clipPath id="fk8"><rect x="586" y="692" width="67" height="54"/></clipPath>
<g clip-path="url(#fk8)">
<text x="619.5" y="699.7" font-size="10.4" font-weight="normal" fill="#000" text-anchor="middle" stroke="#000" stroke-width="0.25">F9</text>
<text x="619.5" y="710.8" font-size="10.4" font-weight="normal" fill="#000" text-anchor="middle" stroke="#000" stroke-width="0.25">Set Location Mode</text>
<text x="619.5" y="721.6999999999999" font-size="10.4" font-weight="normal" fill="#000" text-anchor="middle" stroke="#000" stroke-width="0.25">Toggle Autonotch</text>
<text x="619.5" y="732.5999999999999" font-size="10.4" font-weight="normal" fill="#000" text-anchor="middle" stroke="#000" stroke-width="0.25">Get Outline</text>
</g>
<rect x="655.5" y="691.5" width="68" height="55" fill="#aaaaaa" stroke="#000" stroke-width="1"/>
<rect x="656.5" y="692.5" width="66" height="53" fill="none" stroke="#bcbcbc" stroke-width="1"/>
<clipPath id="fk9"><rect x="656" y="692" width="67" height="54"/></clipPath>
<g clip-path="url(#fk9)">
<text x="689.5" y="699.7" font-size="10.4" font-weight="normal" fill="#000" text-anchor="middle" stroke="#000" stroke-width="0.25">F10</text>
<text x="689.5" y="710.8" font-size="10.4" font-weight="normal" fill="#000" text-anchor="middle" stroke="#000" stroke-width="0.25">Pulldown Menu</text>
<text x="689.5" y="721.6999999999999" font-size="10.4" font-weight="normal" fill="#000" text-anchor="middle" stroke="#000" stroke-width="0.25">Set IC Layer</text>
<text x="689.5" y="732.5999999999999" font-size="10.4" font-weight="normal" fill="#000" text-anchor="middle" stroke="#000" stroke-width="0.25">Browse for File</text>
</g>
<rect x="725.5" y="691.5" width="68" height="55" fill="#aaaaaa" stroke="#000" stroke-width="1"/>
<rect x="726.5" y="692.5" width="66" height="53" fill="none" stroke="#bcbcbc" stroke-width="1"/>
<clipPath id="fk10"><rect x="726" y="692" width="67" height="54"/></clipPath>
<g clip-path="url(#fk10)">
<text x="759.5" y="699.7" font-size="10.4" font-weight="normal" fill="#000" text-anchor="middle" stroke="#000" stroke-width="0.25">F11</text>
<text x="759.5" y="710.8" font-size="10.4" font-weight="normal" fill="#000" text-anchor="middle" stroke="#000" stroke-width="0.25">Read File</text>
<text x="759.5" y="721.6999999999999" font-size="10.4" font-weight="normal" fill="#000" text-anchor="middle" stroke="#000" stroke-width="0.25">Edit File</text>
<text x="759.5" y="732.5999999999999" font-size="10.4" font-weight="normal" fill="#000" text-anchor="middle" stroke="#000" stroke-width="0.25">Save Cell</text>
</g>
<rect x="795.5" y="691.5" width="68" height="55" fill="#aaaaaa" stroke="#000" stroke-width="1"/>
<rect x="796.5" y="692.5" width="66" height="53" fill="none" stroke="#bcbcbc" stroke-width="1"/>
<clipPath id="fk11"><rect x="796" y="692" width="67" height="54"/></clipPath>
<g clip-path="url(#fk11)">
<text x="829.5" y="699.7" font-size="10.4" font-weight="normal" fill="#000" text-anchor="middle" stroke="#000" stroke-width="0.25">F12</text>
<text x="829.5" y="710.8" font-size="10.4" font-weight="normal" fill="#000" text-anchor="middle" stroke="#000" stroke-width="0.25">Pop Window</text>
<text x="829.5" y="721.6999999999999" font-size="10.4" font-weight="normal" fill="#000" text-anchor="middle" stroke="#000" stroke-width="0.25">Close Window</text>
<text x="829.5" y="732.5999999999999" font-size="10.4" font-weight="normal" fill="#000" text-anchor="middle" stroke="#000" stroke-width="0.25"></text>
</g>
<text x="439" y="721.5" font-size="10.4" font-weight="normal" fill="#000" text-anchor="middle" >s</text>
<text x="439" y="732.4" font-size="10.4" font-weight="normal" fill="#000" text-anchor="middle" >c</text>
<text x="439" y="743.3" font-size="10.4" font-weight="normal" fill="#000" text-anchor="middle" >a</text>
<rect x="13" y="747" width="853" height="1" fill="url(#ck_k1)" />
<rect x="13" y="748" width="853" height="1" fill="url(#ck_w0)" />
<rect x="13" y="781" width="853" height="2" fill="url(#ck_k0)" />
<rect x="13" y="783" width="853" height="2" fill="url(#ck_w0)" />
</svg></body></html>
